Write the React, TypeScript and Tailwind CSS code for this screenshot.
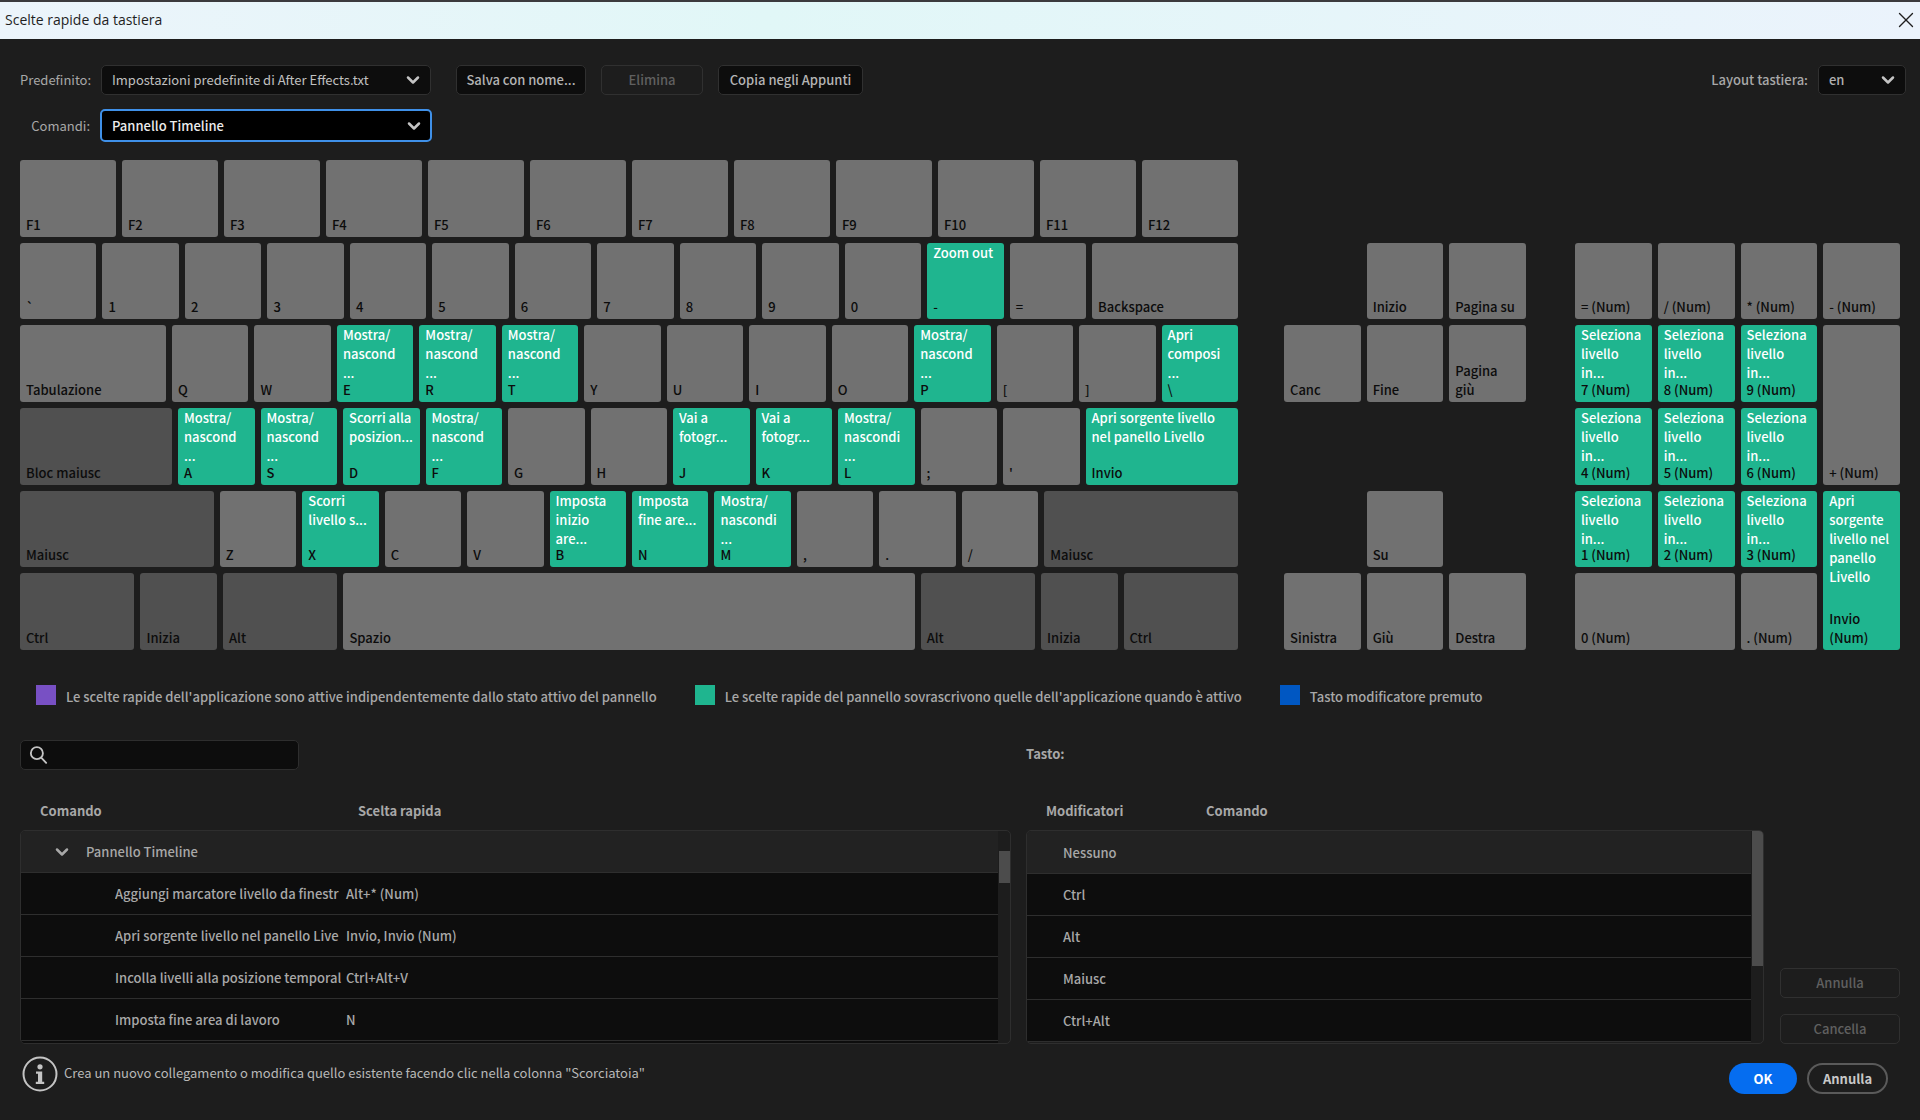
import React, { useState } from 'react';
import { ChevronDown, X } from 'lucide-react';

interface KeyDef {
  label: string;
  command?: string;
  // relative width inside its row
  size?: number;
  modifier?: boolean;
  area?: string;
}

const UNIT = 153;

const mainRows: KeyDef[][] = [
  ['F1', 'F2', 'F3', 'F4', 'F5', 'F6', 'F7', 'F8', 'F9', 'F10', 'F11', 'F12'].map((label) => ({ label })),
  [
    ...['`', '1', '2', '3', '4', '5', '6', '7', '8', '9', '0'].map((label) => ({ label })),
    { label: '-', command: 'Zoom out' },
    { label: '=' },
    { label: 'Backspace', size: 292 },
  ],
  [
    { label: 'Tabulazione', size: 292 },
    { label: 'Q' },
    { label: 'W' },
    { label: 'E', command: 'Mostra/\nnascond\n...' },
    { label: 'R', command: 'Mostra/\nnascond\n...' },
    { label: 'T', command: 'Mostra/\nnascond\n...' },
    { label: 'Y' },
    { label: 'U' },
    { label: 'I' },
    { label: 'O' },
    { label: 'P', command: 'Mostra/\nnascond\n...' },
    { label: '[' },
    { label: ']' },
    { label: '\\', command: 'Apri\ncomposi\n...' },
  ],
  [
    { label: 'Bloc maiusc', size: 304, modifier: true },
    { label: 'A', command: 'Mostra/\nnascond\n...' },
    { label: 'S', command: 'Mostra/\nnascond\n...' },
    { label: 'D', command: 'Scorri alla\nposizion...' },
    { label: 'F', command: 'Mostra/\nnascond\n...' },
    { label: 'G' },
    { label: 'H' },
    { label: 'J', command: 'Vai a\nfotogr...' },
    { label: 'K', command: 'Vai a\nfotogr...' },
    { label: 'L', command: 'Mostra/\nnascondi\n...' },
    { label: ';' },
    { label: "'" },
    { label: 'Invio', command: 'Apri sorgente livello\nnel panello Livello', size: 305 },
  ],
  [
    { label: 'Maiusc', size: 388, modifier: true },
    { label: 'Z' },
    { label: 'X', command: 'Scorri\nlivello s...' },
    { label: 'C' },
    { label: 'V' },
    { label: 'B', command: 'Imposta\ninizio\nare...' },
    { label: 'N', command: 'Imposta\nfine are...' },
    { label: 'M', command: 'Mostra/\nnascondi\n...' },
    { label: ',' },
    { label: '.' },
    { label: '/' },
    { label: 'Maiusc', size: 388, modifier: true },
  ],
  [
    { label: 'Ctrl', size: 229, modifier: true },
    { label: 'Inizia', modifier: true },
    { label: 'Alt', size: 229, modifier: true },
    { label: 'Spazio', size: 1143 },
    { label: 'Alt', size: 229, modifier: true },
    { label: 'Inizia', modifier: true },
    { label: 'Ctrl', size: 229, modifier: true },
  ],
];

const navKeys: KeyDef[] = [
  { label: 'Inizio', area: 'col-start-2 row-start-2' },
  { label: 'Pagina su', area: 'col-start-3 row-start-2' },
  { label: 'Canc', area: 'col-start-1 row-start-3' },
  { label: 'Fine', area: 'col-start-2 row-start-3' },
  { label: 'Pagina\ngiù', area: 'col-start-3 row-start-3' },
  { label: 'Su', area: 'col-start-2 row-start-5' },
  { label: 'Sinistra', area: 'col-start-1 row-start-6' },
  { label: 'Giù', area: 'col-start-2 row-start-6' },
  { label: 'Destra', area: 'col-start-3 row-start-6' },
];

const select = 'Seleziona\nlivello\nin...';

const numKeys: KeyDef[] = [
  { label: '= (Num)', area: 'col-start-1 row-start-2' },
  { label: '/ (Num)', area: 'col-start-2 row-start-2' },
  { label: '* (Num)', area: 'col-start-3 row-start-2' },
  { label: '- (Num)', area: 'col-start-4 row-start-2' },
  { label: '7 (Num)', command: select, area: 'col-start-1 row-start-3' },
  { label: '8 (Num)', command: select, area: 'col-start-2 row-start-3' },
  { label: '9 (Num)', command: select, area: 'col-start-3 row-start-3' },
  { label: '+ (Num)', area: 'col-start-4 row-start-3 row-span-2' },
  { label: '4 (Num)', command: select, area: 'col-start-1 row-start-4' },
  { label: '5 (Num)', command: select, area: 'col-start-2 row-start-4' },
  { label: '6 (Num)', command: select, area: 'col-start-3 row-start-4' },
  { label: '1 (Num)', command: select, area: 'col-start-1 row-start-5' },
  { label: '2 (Num)', command: select, area: 'col-start-2 row-start-5' },
  { label: '3 (Num)', command: select, area: 'col-start-3 row-start-5' },
  {
    label: 'Invio\n(Num)',
    command: 'Apri\nsorgente\nlivello nel\npanello\nLivello',
    area: 'col-start-4 row-start-5 row-span-2',
  },
  { label: '0 (Num)', area: 'col-start-1 col-span-2 row-start-6' },
  { label: '. (Num)', area: 'col-start-3 row-start-6' },
];

const legend = [
  { color: 'bg-[#7850c4]', text: "Le scelte rapide dell'applicazione sono attive indipendentemente dallo stato attivo del pannello" },
  { color: 'bg-[#1fb58f]', text: "Le scelte rapide del pannello sovrascrivono quelle dell'applicazione quando è attivo" },
  { color: 'bg-[#0057c2]', text: 'Tasto modificatore premuto' },
];

const commands = [
  { name: 'Aggiungi marcatore livello da finestr', shortcut: 'Alt+* (Num)' },
  { name: 'Apri sorgente livello nel panello Live', shortcut: 'Invio, Invio (Num)' },
  { name: 'Incolla livelli alla posizione temporal', shortcut: 'Ctrl+Alt+V' },
  { name: 'Imposta fine area di lavoro', shortcut: 'N' },
];

const modifiers = ['Nessuno', 'Ctrl', 'Alt', 'Maiusc', 'Ctrl+Alt'];

const keyColor = (k: KeyDef) => {
  if (k.command) return 'bg-[#1fb58f]';
  return k.modifier ? 'bg-[#505050]' : 'bg-[#717171]';
};

const Key: React.FC<{ def: KeyDef; inRow?: boolean }> = ({ def, inRow }) => (
  <button
    className={`grid min-w-0 rounded-[3px] text-left whitespace-pre leading-[19px] ${keyColor(def)} ${def.area ?? ''}`}
    style={inRow ? { flex: `${def.size ?? UNIT} 1 0px` } : undefined}
  >
    {def.command && (
      <span className="col-start-1 row-start-1 self-start pl-[6px] text-white">{def.command}</span>
    )}
    <span className="col-start-1 row-start-1 self-end pb-[3px] pl-[6px] text-[#0c0c0c]">{def.label}</span>
  </button>
);

interface DropdownProps {
  id: string;
  options: string[];
  boxClass: string;
  selectClass: string;
}

const Dropdown: React.FC<DropdownProps> = ({ id, options, boxClass, selectClass }) => (
  <div className={`relative ${boxClass}`}>
    <select id={id} className={`h-full w-full appearance-none rounded-[5px] pr-8 outline-none ${selectClass}`}>
      {options.map((o) => (
        <option key={o}>{o}</option>
      ))}
    </select>
    <ChevronDown
      className="pointer-events-none absolute top-1/2 right-2 h-5 w-5 -translate-y-1/2 text-[#c4c4c4]"
      strokeWidth={3}
    />
  </div>
);

const App: React.FC = () => {
  const [query, setQuery] = useState('');

  const darkButton = 'h-[30px] rounded-[5px] border border-[#303030] bg-[#0d0d0d] pb-px text-[#b4b4b4]';
  const disabledButton = 'h-[30px] rounded-[5px] border border-[#303030] pb-px text-[#606060]';

  return (
    <div className="min-h-screen border-t-2 border-[#3b3a3d] bg-[#1d1d1d] font-['Noto_Sans_CJK_SC',sans-serif] text-[13px] leading-[19px] font-medium text-[#a8a8a8]">
      {/* Title bar */}
      <header className="flex h-[37px] items-center justify-between bg-linear-to-r from-[#ecf4fb] via-[#e1f7f7] via-40% to-[#ebf3fc] pr-px pb-[2px] pl-[5px] text-[#1f1f1f]">
        <h1 className="font-['Open_Sans',sans-serif] text-sm font-normal">Scelte rapide da tastiera</h1>
        <button aria-label="Chiudi">
          <X className="h-[26px] w-[26px]" strokeWidth={1.25} />
        </button>
      </header>

      <main className="px-5">
        {/* Preset and command pickers */}
        <div className="flex items-center pt-[26px]">
          <label htmlFor="preset" className="w-[70px] pb-px text-right font-normal">Predefinito:</label>
          <Dropdown
            id="preset"
            options={['Impostazioni predefinite di After Effects.txt']}
            boxClass="ml-[11px] h-[30px] w-[330px]"
            selectClass="border border-[#303030] bg-[#0d0d0d] pb-[2px] pl-[10px] font-normal text-[#c0c0c0]"
          />
          <button className={`ml-[25px] w-[130px] ${darkButton}`}>Salva con nome...</button>
          <button disabled className={`ml-[15px] w-[102px] ${disabledButton}`}>Elimina</button>
          <button className={`ml-[15px] w-[145px] ${darkButton}`}>Copia negli Appunti</button>
          <label htmlFor="layout" className="ml-auto pb-px">Layout tastiera:</label>
          <Dropdown
            id="layout"
            options={['en', 'it', 'fr']}
            boxClass="-mr-[6px] ml-[10px] h-[30px] w-[88px]"
            selectClass="border border-[#303030] bg-[#0d0d0d] pb-[2px] pl-[10px] text-[#b0b0b0]"
          />
        </div>
        <div className="mt-[14px] flex items-center">
          <label htmlFor="commands" className="w-[70px] text-right font-normal">Comandi:</label>
          <Dropdown
            id="commands"
            options={['Pannello Timeline', 'Applicazione']}
            boxClass="ml-[10px] h-[33px] w-[332px]"
            selectClass="border-2 border-[#3f90e8] bg-black pl-[10px] text-[#ececec]"
          />
        </div>

        {/* Keyboard */}
        <section className="mt-[18px] flex h-[490px]">
          <div className="mr-[46px] flex flex-[1218] flex-col gap-[6px]">
            {mainRows.map((row, i) => (
              <div key={i} className="flex flex-1 gap-[6px]">
                {row.map((k, j) => (
                  <Key key={j} def={k} inRow />
                ))}
              </div>
            ))}
          </div>
          <div className="mr-[49px] grid flex-[242] grid-cols-3 grid-rows-6 gap-[6px]">
            {navKeys.map((k) => (
              <Key key={k.label} def={k} />
            ))}
          </div>
          <div className="grid flex-[325] grid-cols-4 grid-rows-6 gap-[6px]">
            {numKeys.map((k) => (
              <Key key={k.label} def={k} />
            ))}
          </div>
        </section>

        {/* Legend */}
        <ul className="mt-[35px] flex gap-[38px] pl-4">
          {legend.map((item) => (
            <li key={item.text} className="flex gap-[10px]">
              <span className={`h-5 w-5 ${item.color}`} />
              <span className="pt-[2px]">{item.text}</span>
            </li>
          ))}
        </ul>

        <div className="mt-[34px] flex">
          {/* Command list */}
          <section className="flex-[991]">
            <label className="flex h-[30px] w-[279px] items-center rounded-[5px] border border-[#2e2e2e] bg-[#0d0d0d] pl-2">
              <svg className="h-5 w-5 text-[#c4c4c4]" viewBox="0 0 20 20" fill="none" stroke="currentColor" strokeWidth="2" strokeLinecap="round">
                <circle cx="8.5" cy="8" r="6.5" />
                <path d="M13.2 12.8 L18.5 18.5" />
              </svg>
              <input
                type="text"
                aria-label="Cerca"
                value={query}
                onChange={(e) => setQuery(e.target.value)}
                className="w-full bg-transparent px-2 outline-none"
              />
            </label>
            <div className="relative">
              <table className="block">
                <thead className="block pt-[31px] pb-[10px] pl-5 text-left font-bold">
                  <tr className="flex">
                    <th className="w-[318px]">Comando</th>
                    <th>Scelta rapida</th>
                  </tr>
                </thead>
                <tbody className="block h-[214px] overflow-hidden rounded-[5px] border border-[#2e2e2e] pr-3">
                  <tr className="flex h-[42px] items-center border-b border-[#2e2e2e] bg-[#222222]">
                    <td colSpan={2} className="flex items-center pl-[31px]">
                      <button className="flex items-center gap-[14px]">
                        <ChevronDown className="h-5 w-5" strokeWidth={3} />
                        Pannello Timeline
                      </button>
                    </td>
                  </tr>
                  {commands.map((c) => (
                    <tr key={c.name} className="flex h-[42px] items-center border-b border-[#2e2e2e] bg-[#0d0d0d] pl-[94px]">
                      <td className="w-[228px] overflow-hidden whitespace-nowrap">{c.name}</td>
                      <td className="pl-[3px]">{c.shortcut}</td>
                    </tr>
                  ))}
                  <tr className="flex h-[42px] bg-[#0d0d0d]" />
                </tbody>
              </table>
              <div className="absolute right-px bottom-[161px] h-8 w-[11px] bg-[#4c4c4c]" />
            </div>
          </section>

          {/* Modifiers of the selected key */}
          <section className="ml-[15px] flex-[738]">
            <h2 className="flex h-[30px] items-center pb-1 font-bold">Tasto:</h2>
            <div className="relative">
              <table className="block">
                <thead className="block pt-[31px] pb-[10px] pl-5 text-left font-bold">
                  <tr className="flex">
                    <th className="w-[160px]">Modificatori</th>
                    <th>Comando</th>
                  </tr>
                </thead>
                <tbody className="block h-[214px] overflow-hidden rounded-[5px] border border-[#2e2e2e] pr-3">
                  {modifiers.map((m, i) => (
                    <tr
                      key={m}
                      className={`flex items-center border-b border-[#2e2e2e] pl-9 ${i === 0 ? 'h-[43px] bg-[#222222]' : 'h-[42px] bg-[#0d0d0d]'}`}
                    >
                      <td className="w-[144px]">{m}</td>
                      <td />
                    </tr>
                  ))}
                </tbody>
              </table>
              <div className="absolute right-px bottom-[78px] h-[135px] w-[11px] rounded-tr bg-[#4c4c4c]" />
            </div>
          </section>

          <div className="ml-4 flex w-[120px] flex-col justify-end gap-4">
            <button disabled className={disabledButton}>Annulla</button>
            <button disabled className={disabledButton}>Cancella</button>
          </div>
        </div>

        {/* Footer */}
        <footer className="flex pt-3 pb-5">
          <svg className="mr-[6px] ml-[2px] h-9 w-9 text-[#c4c4c4]" viewBox="0 0 36 36" fill="none">
            <circle cx="18" cy="18" r="16.5" stroke="currentColor" strokeWidth="2" />
            <circle cx="18" cy="10.8" r="2.6" fill="currentColor" />
            <path d="M14 15.5 H20.2 V25.8 H22.2 V28 H13.8 V25.8 H16 V17.7 H14 Z" fill="currentColor" />
          </svg>
          <p className="pt-[7px] font-normal text-[#b8b8b8]">Crea un nuovo collegamento o modifica quello esistente facendo clic nella colonna "Scorciatoia"</p>
          <div className="mt-[7px] mr-3 ml-auto flex gap-[10px] font-bold">
            <button className="h-[31px] w-[68px] rounded-full bg-[#056df0] pb-px text-white">OK</button>
            <button className="h-[31px] w-[81px] rounded-full border-2 border-[#5a5a5a] pb-px text-[#c8c8c8]">Annulla</button>
          </div>
        </footer>
      </main>
    </div>
  );
};

export default App;
